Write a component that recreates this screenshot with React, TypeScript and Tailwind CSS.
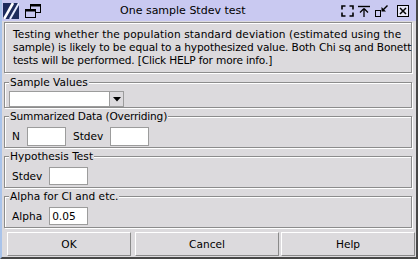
import React from "react";

const etched = "border border-[#8c8c8c] shadow-[inset_1px_1px_0_#ffffff,1px_1px_0_#ffffff]";

function AppIcon() {
  return (
    <svg width="16" height="16" viewBox="0 0 16 16" className="block">
      <rect x="0" y="0" width="16" height="16" fill="#1d2b5c" />
      <path d="M1 16 L10 0" stroke="#ffffff" strokeWidth="2.6" />
      <path d="M7 16 L16 0" stroke="#e8ecff" strokeWidth="2" />
    </svg>
  );
}

function WindowsIcon() {
  return (
    <svg width="16" height="14" viewBox="0 0 16 14" className="block">
      <rect x="5.5" y="0.5" width="10" height="8" fill="none" stroke="#000" strokeWidth="1" />
      <rect x="5.5" y="0.5" width="10" height="2" fill="#000" />
      <rect x="0.5" y="5.5" width="10" height="8" fill="#c9c9f1" stroke="#000" strokeWidth="1" />
      <rect x="0.5" y="5.5" width="10" height="2" fill="#000" />
    </svg>
  );
}

function MaxIcon() {
  return (
    <svg width="13" height="12" viewBox="0 0 13 12" className="block">
      <path d="M1 4.5V1H4.5 M8.5 1H12V4.5 M12 7.5V11H8.5 M4.5 11H1V7.5" fill="none" stroke="#000" strokeWidth="1.6" />
    </svg>
  );
}

function PinIcon() {
  return (
    <svg width="12" height="12" viewBox="0 0 12 12" className="block">
      <path d="M0 1.5H12" stroke="#000" strokeWidth="1.4" />
      <path d="M6 3.5 L2 7.5 M6 3.5 L10 7.5 M6 3.5 V12" fill="none" stroke="#000" strokeWidth="1.3" />
    </svg>
  );
}

function MinIcon() {
  return (
    <svg width="13" height="12" viewBox="0 0 13 12" className="block">
      <rect x="0.5" y="5.5" width="5" height="6" fill="none" stroke="#000" strokeWidth="1" />
      <path d="M12.5 0.5 L8 5" stroke="#000" strokeWidth="1.4" />
      <path d="M6.5 6.5 L6.5 2 L11 6.5 Z" fill="#000" />
    </svg>
  );
}

function CloseIcon() {
  return (
    <svg width="12" height="12" viewBox="0 0 12 12" className="block">
      <rect x="0.5" y="0.5" width="11" height="11" fill="#e6e6f6" stroke="#000" strokeWidth="1" />
      <path d="M3 3 L9 9 M9 3 L3 9" stroke="#000" strokeWidth="1.5" />
    </svg>
  );
}

function Field({ value, h }: { value?: string; h: string }) {
  return (
    <div className={`flex w-[39px] items-center border border-[#9c9c9c] bg-white pl-[2px] ${h}`}>
      {value}
    </div>
  );
}

const btn =
  "flex items-center justify-center border-b border-l border-r border-t border-b-[#8a8a8a] border-l-white border-r-[#8a8a8a] border-t-white";

export default function App() {
  return (
    <div className="h-[263px] w-[420px] bg-white text-[10.6px] leading-[13px] text-black [font-family:'DejaVu_Sans',sans-serif]">
      <div className="flex h-[259px] w-[418px] flex-col border-b-2 border-l-2 border-r-2 border-b-[#474747] border-l-[#a9c3ea] border-r-[#474747] bg-[#dcdadd]">
        {/* title bar */}
        <div className="flex h-[21px] shrink-0 items-center bg-[#c9c9f1]">
          <div className="ml-[1px]">
            <AppIcon />
          </div>
          <div className="ml-[6px]">
            <WindowsIcon />
          </div>
          <div className="ml-[79px] whitespace-nowrap text-[11px]">One sample Stdev test</div>
          <div className="flex-1" />
          <div className="flex items-center pr-[7px]">
            <MaxIcon />
            <div className="ml-[4px]">
              <PinIcon />
            </div>
            <div className="ml-[5px]">
              <MinIcon />
            </div>
            <div className="ml-[9px]">
              <CloseIcon />
            </div>
          </div>
        </div>

        {/* content */}
        <div className="flex flex-1 flex-col pl-[2px]">
          <div className={`mt-[1px] h-[51px] w-[408px] ${etched} whitespace-nowrap pl-[8px] pt-[5px]`}>
            <div className="tracking-[0.1px]">Testing whether the population standard deviation (estimated using the</div>
            <div className="tracking-[-0.13px]">sample) is likely to be equal to a hypothesized value. Both Chi sq and Bonett</div>
            <div className="tracking-[-0.17px]">tests will be performed. [Click HELP for more info.]</div>
          </div>

          <fieldset className={`mt-[3px] w-[408px] ${etched} pl-[4px] pt-[2px]`}>
            <legend className="bg-[#dcdadd] px-[1px]">Sample Values</legend>
            <div className="flex h-[16px] w-[115px] border border-[#9c9c9c] bg-white">
              <div className="flex-1" />
              <div className="flex w-[14px] items-center justify-center border-l border-[#9c9c9c] bg-[#dcdadd] pt-[1px]">
                <svg width="8" height="5" viewBox="0 0 8 5" className="block">
                  <path d="M0 0 H8 L4 4.5 Z" fill="#000" />
                </svg>
              </div>
            </div>
          </fieldset>

          <fieldset className={`mt-[2px] w-[408px] ${etched} pb-[1px] pl-[4px] pt-[4px]`}>
            <legend className="bg-[#dcdadd] px-[1px] tracking-[-0.2px]">Summarized Data (Overriding)</legend>
            <div className="flex items-center gap-[7px] pl-[3px]">
              <span>N</span>
              <Field h="h-[19px]" />
              <span>Stdev</span>
              <Field h="h-[19px]" />
            </div>
          </fieldset>

          <fieldset className={`mt-[2px] w-[408px] ${etched} pb-[2px] pl-[4px] pt-[4px]`}>
            <legend className="bg-[#dcdadd] px-[1px]">Hypothesis Test</legend>
            <div className="flex items-center gap-[7px] pl-[3px]">
              <span>Stdev</span>
              <Field h="h-[18px]" />
            </div>
          </fieldset>

          <fieldset className={`mt-[2px] w-[408px] ${etched} pb-[2px] pl-[4px] pt-[4px]`}>
            <legend className="bg-[#dcdadd] px-[1px]">Alpha for CI and etc.</legend>
            <div className="flex items-center gap-[7px] pl-[3px]">
              <span>Alpha</span>
              <Field h="h-[18px]" value="0.05" />
            </div>
          </fieldset>

          <div className="ml-[3px] mt-[4px] flex h-[24px]">
            <div className={`w-[124px] ${btn}`}>OK</div>
            <div className={`ml-[4px] w-[144px] ${btn}`}>Cancel</div>
            <div className={`ml-[2px] w-[134px] ${btn}`}>Help</div>
          </div>
        </div>
      </div>
    </div>
  );
}
